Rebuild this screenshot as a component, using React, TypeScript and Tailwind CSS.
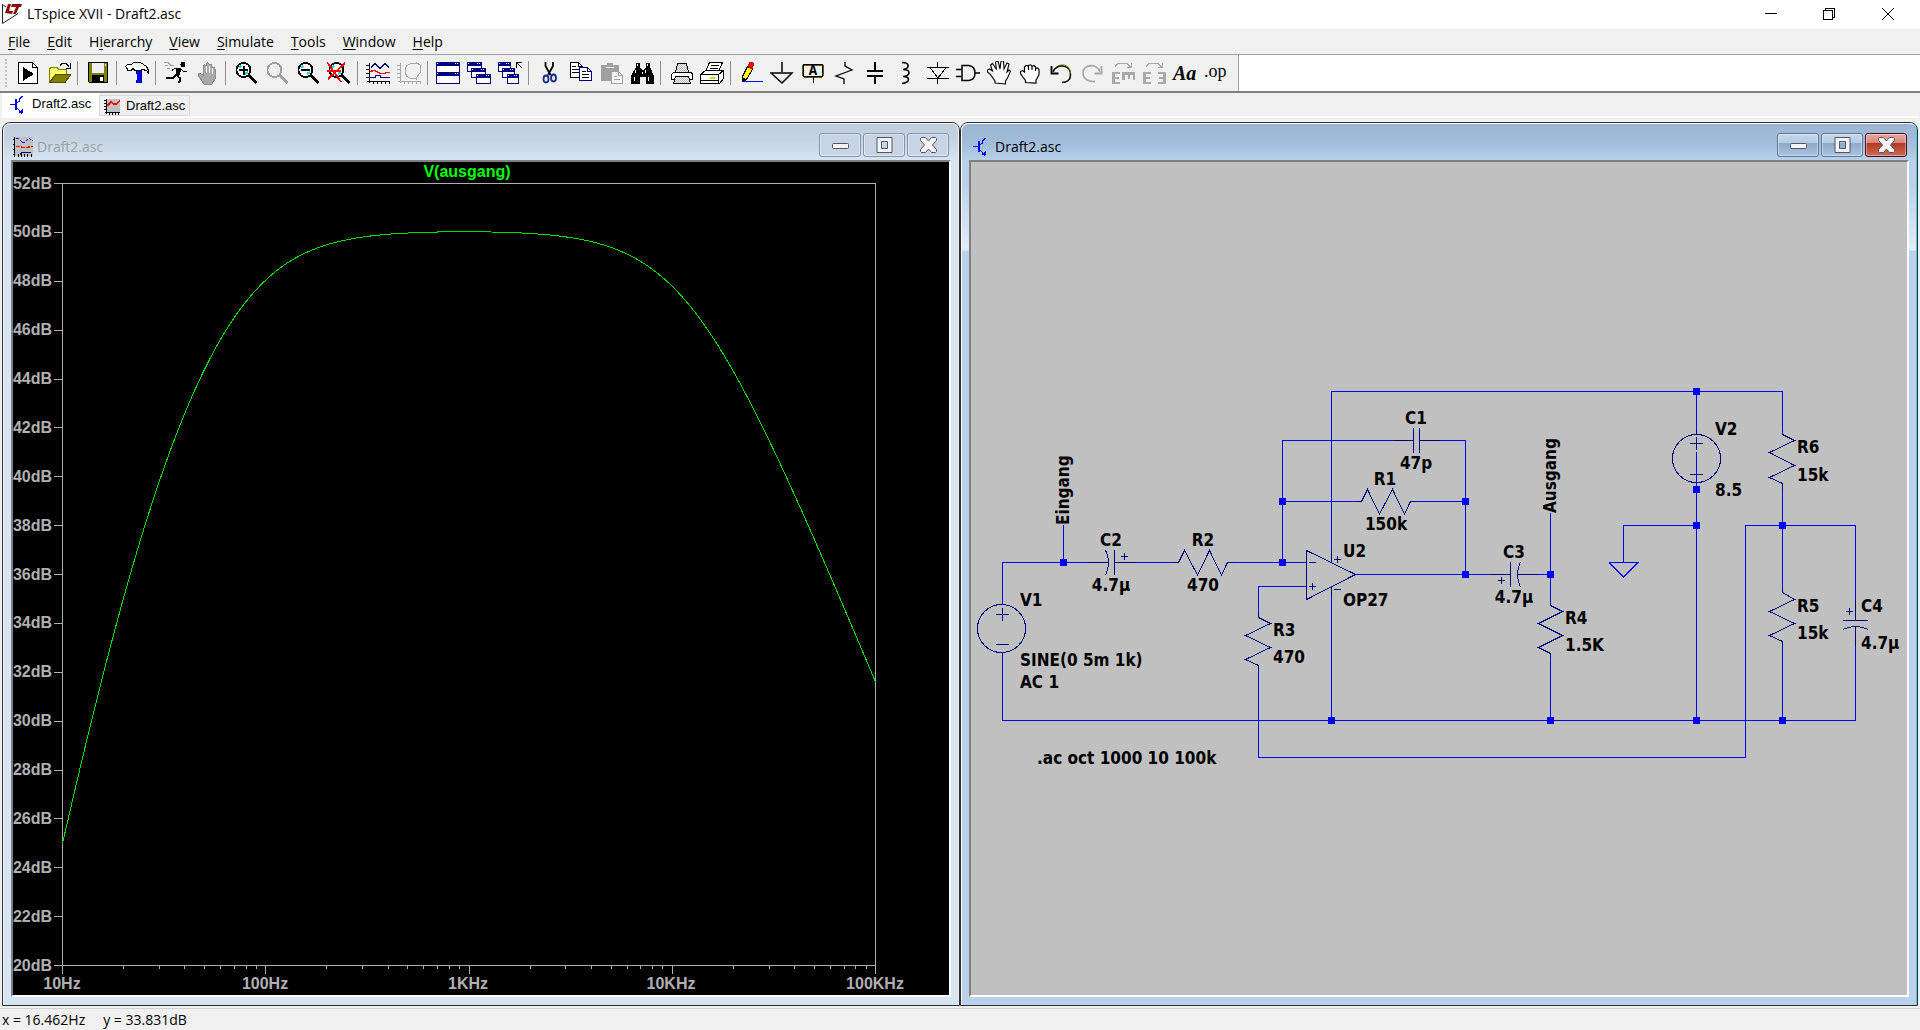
import React from "react";

type Kids = { children?: React.ReactNode };

/* ---------- toolbar icons, each drawn on a 24 x 24 grid ---------- */

function Ico({ children, smooth }: Kids & { smooth?: boolean }) {
  return (
    <svg width="24" height="24" viewBox="0 0 24 24" fill="none" stroke="#000" shapeRendering={smooth ? "auto" : "crispEdges"} aria-hidden="true">
      {children}
    </svg>
  );
}

const RunSheet = () => (
  <Ico>
    <path d="M2.5 1.5h14l5 5v16h-19z" fill="#fff" />
    <path d="M16.5 1.5v5h5" />
    <path d="M7.5 7v12L17 13z" fill="#000" />
  </Ico>
);
const OpenIcon = () => (
  <Ico>
    <path d="M2.5 21V8l2-2h5l2 2h8v5H9z" fill="#ffff66" stroke="#808000" />
    <path d="M2.5 21.5L9 13.5h15l-6 8z" fill="#808000" stroke="#4d4d00" />
    <path d="M13 4.500l2-2h4l3 3M23.500 2v5H19" />
  </Ico>
);
const SaveIcon = () => (
  <Ico>
    <path d="M2.500 1.500h19v20h-18l-1-1z" fill="#808000" />
    <path d="M6 2h12v10H6z" fill="#efefef" stroke="none" />
    <path d="M6 14h12v8H6z" fill="#000" stroke="none" />
    <path d="M14 16h3v4h-3z" fill="#fff" stroke="none" />
    <path d="M19 3h1v2h-1z" fill="#fff" stroke="none" />
  </Ico>
);
const HammerIcon = () => (
  <Ico>
    <path d="M.5 5.500l2-2h4l2-2h7l3 2 3 2 2 4v3l-2-3-4-1-2 1H10l-2-2-2 2H3l-1-2z" fill="#fff" />
    <path d="M11 10h5v3h-2v-2h-2v2h-1z" fill="#000080" stroke="none" />
    <path d="M12 10h4v12h-4z" fill="#0000ff" stroke="none" />
    <path d="M11 19h1v3h-1zM16 10h1v12h-1z" fill="#000080" stroke="none" />
  </Ico>
);
const RunnerIcon = () => (
  <Ico>
    <circle cx="19" cy="3.500" r="2.500" fill="#000" stroke="none" />
    <path d="M13 7l4 1-2 6-3 1z" fill="#000" stroke="#000" />
    <path d="M8 9.500l3-2.500h5l3 3h4" />
    <path d="M12 14l-3 3H2M12 14l4 3v3l-2 2" strokeWidth="1.500" />
    <path d="M0 1.500h4l3 3h3M3 7.500h3M1 4.500h3" stroke="#a0a0a0" />
  </Ico>
);
const HandGray = () => (
  <Ico>
    <path d="M8 14V5l1.500-1.500L11 5V3l1.500-1.500L14 3v1l2-1 1 2v2l2-1 1 2v10l-3 5H9l-6-9 1-2 2 1z" fill="#a8a8a8" stroke="#8c8c8c" />
    <path d="M11.500 5v7M14.500 5v7M17.500 7v6" stroke="#fff" />
  </Ico>
);
function Magnifier({ color = "#000", children }: Kids & { color?: string }) {
  return (
    <Ico>
      <circle cx="9.500" cy="9" r="7" stroke={color} strokeWidth="1.800" fill={color === "#000" ? "#fff" : "#eee"} />
      {color === "#000" && <path d="M5 7l2-2M11 13l3-2" stroke="#00e0e8" strokeWidth="2" />}
      <path d="M15 14.500l7.500 7.500" stroke={color} strokeWidth="3" />
      {children}
    </Ico>
  );
}
const ZoomIn = () => (<Magnifier><path d="M5 9h9M9.500 4.500v9" strokeWidth="2" /></Magnifier>);
const ZoomArea = () => <Magnifier color="#a0a0a0" />;
const ZoomOut = () => (<Magnifier><path d="M5 9h9" strokeWidth="2" /></Magnifier>);
const ZoomFit = () => (
  <Magnifier>
    <path d="M0 1l14 20M18 2L1 18M0 10h14" stroke="#f00" strokeWidth="1.800" />
  </Magnifier>
);
const Axes = ({ color }: { color: string }) => (
  <path d="M3.500 2v20M1 20.500h23M0 4.500h3M0 8.500h3M0 12.500h3M0 16.500h3M7.500 20v3M11.500 20v3M15.500 20v3M19.500 20v3M23.500 20v3" stroke={color} />
);
const WaveIcon = () => (
  <Ico>
    <Axes color="#000" />
    <path d="M5 6.500l4-4 5 5 5-5 4 4" stroke="#000080" />
    <path d="M4 10.500l4-1 3 1 3 2h4l3-1h3" stroke="#f00" strokeWidth="1.500" />
    <path d="M4 16.500h5l1-2h4v2h10" stroke="#000080" />
  </Ico>
);
const SmithIcon = () => (
  <Ico>
    <Axes color="#a8a8a8" />
    <path d="M20 2.500h-6l-4 2-2 3v4l2 4 4 2h6M19 1l5 4M24 5l-1 3v4l-4 5v2" stroke="#a8a8a8" />
  </Ico>
);
const MiniWin = ({ x, y, w, h }: { x: number; y: number; w: number; h: number }) => (
  <g>
    <rect x={x + 0.5} y={y + 0.5} width={w - 1} height={h - 1} fill="#fff" stroke="#000080" />
    <rect x={x} y={y} width={w} height="4" fill="#000080" stroke="none" />
    <path d={`M${x + w - 5} ${y + 1.5}h1M${x + w - 3} ${y + 1.5}h1M${x + 1} ${y + 1.5}h1`} stroke="#fff" />
  </g>
);
const TileIcon = () => (<Ico><MiniWin x={0} y={1} w={24} h={11} /><MiniWin x={0} y={11} w={24} h={12} /></Ico>);
const CascadeIcon = () => (
  <Ico><MiniWin x={0} y={1} w={15} h={10} /><MiniWin x={4} y={7} w={15} h={10} /><MiniWin x={9} y={13} w={15} h={10} /></Ico>
);
const CascadeBack = () => (
  <Ico>
    <MiniWin x={0} y={1} w={13} h={10} /><MiniWin x={4} y={7} w={13} h={10} /><MiniWin x={9} y={13} w={12} h={10} />
    <path d="M18.500 7V1.500H24M19 2l5 5" />
  </Ico>
);
const CutIcon = () => (
  <Ico smooth>
    <path d="M8.500 1v4l5 9M16 1v4l-5 9" strokeWidth="1.800" />
    <ellipse cx="9" cy="18" rx="2.500" ry="3.500" stroke="#1a2a90" strokeWidth="1.800" />
    <ellipse cx="16.500" cy="17" rx="2.500" ry="3.500" stroke="#1a2a90" strokeWidth="1.800" />
  </Ico>
);
const CopyIcon = () => (
  <Ico>
    <path d="M2.500 1.500h8l4 4v11h-12z" fill="#fff" />
    <path d="M10.500 1.500v4h4M4 5.500h4M4 8.500h7M4 11.500h7" />
    <path d="M11.500 6.500h8l4 4v9h-12z" fill="#fff" stroke="#000080" />
    <path d="M19.500 6.500v4h4" stroke="#000080" />
    <path d="M14 10.500h4M14 13.500h7M14 16.500h7" />
  </Ico>
);
const PasteIcon = () => (
  <Ico>
    <path d="M2 4h6V2h6v2h6v16H2z" fill="#a0a0a0" stroke="none" />
    <path d="M7 6.500h8" stroke="#eee" />
    <path d="M12.500 10.500h7l4 4v8h-11z" fill="#f4f4f4" stroke="#a0a0a0" />
    <path d="M19.500 10.500v4h4M15 15.500h3M15 18.500h6" stroke="#a0a0a0" />
  </Ico>
);
const FindIcon = () => (
  <Ico>
    <path d="M6 2h4v4l2 3h2l2-3V2h4v4l4 9v8h-8v-7h-6v7H1v-8l5-9z" fill="#000" stroke="none" />
    <path d="M7 3h1v2H7zM17 3h1v2h-1zM5 9h1v3H5zM4 16h1v4H4zM15 9h1v3h-1zM18 16h1v4h-1zM12 11h1v2h-1z" fill="#fff" stroke="none" />
  </Ico>
);
const Dots = () => (
  <defs>
    <pattern id="dots" width="2" height="2" patternUnits="userSpaceOnUse">
      <path d="M0 0h1v1H0zM1 1h1v1H1z" fill="#b4b4b4" stroke="none" />
    </pattern>
  </defs>
);
const PrintIcon = () => (
  <Ico>
    <Dots />
    <path d="M8.500 2.500h9l2 9h-13z" fill="#fff" />
    <path d="M8.500 2.500h9l2 9h-13z" fill="url(#dots)" />
    <path d="M4.500 11.500h18l1 2v5h-21v-5z" fill="#fff" />
    <path d="M6.500 15.500h13l2 7h-17z" fill="#fff" />
    <path d="M6.500 15.500h13l2 7h-17z" fill="url(#dots)" />
  </Ico>
);
const PrintSetup = () => (
  <Ico>
    <path d="M9.500 1.500h13l-4 9h-13z" fill="#fff" />
    <path d="M11 4.500h8M10 7.500h8" />
    <path d="M.5 13.500l5-4h18v8l-4 5H.5z" fill="#fff" />
    <path d="M.5 13.500h18l5-4M18.500 13.500v9M1 19.500h18" />
    <path d="M10 16.500h5" stroke="#d8d800" strokeWidth="2" />
  </Ico>
);
const PencilIcon = () => (
  <Ico>
    <path d="M3.500 15.500l5-10 5 3-6 10-4 2z" fill="#ff0" />
    <path d="M9 5l2-4h2l1 1v3l-1 3z" fill="#f00" stroke="#c00" />
    <path d="M2.500 16v5h2l3-3z" fill="#000" stroke="none" />
    <path d="M3 20.500h21" stroke="#0000ff" />
  </Ico>
);
const GroundIcon = () => (<Ico smooth><path d="M12 1v10M1 12h21L12 22z" strokeWidth="1.500" /></Ico>);
const LabelIcon = () => (
  <Ico>
    <path d="M3 3.500h18l1 1v10l-1 1H3l-1-1v-10z" stroke="#606000" strokeWidth="2" />
    <path d="M2.500 3.500h19v12h-19z" />
    <path d="M12.500 16v6" />
    <text x="12" y="14" textAnchor="middle" fill="#000" stroke="none" className="font-['Liberation_Mono'] text-sm font-bold">A</text>
  </Ico>
);
const ResistorIcon = () => (<Ico smooth><path d="M13 1v4l7 4L4 15l8 3v5" strokeWidth="1.300" /></Ico>);
const CapacitorIcon = () => (<Ico><path d="M12 1v9M12 15v8" strokeWidth="1.500" /><path d="M4 10h16M4 15h16" strokeWidth="2" /></Ico>);
const InductorIcon = () => (<Ico smooth><path d="M8 1.500c8 0 8 6 1 7 8 0 8 6 0 7 8 0 7 6-1 7" strokeWidth="1.600" /></Ico>);
const DiodeIcon = () => (<Ico><path d="M2 6.500h22M5 6.500l8 10.500 8-10.500M2 17.500h22M12.500 1v5M12.500 18v5" /></Ico>);
const GateIcon = () => (<Ico smooth><path d="M6 4.500h7q6 1 6 7.500t-6 7.500H6zM0 8.500h6M0 15.500h6M19 12h5" strokeWidth="1.500" /></Ico>);
const MoveIcon = () => (
  <Ico smooth>
    <path d="M8 22v-2l-5-7-2.500-2v-2l2-1 3 2-2-6 2-1.500 4 6-1-7.500 2.500-1 2 8 1-8 2.500 0 .5 8 3-6 2 1-2 8 2-2 1.500 1-3 7-2 3v3z" fill="#fff" strokeWidth="1.100" />
  </Ico>
);
const DragIcon = () => (
  <Ico smooth>
    <path d="M7.500 21.500v-2l-3-4-2-3v-2l2-1 2 1.500V6L8 4.500 10 5l1-1h2l1 1.500 2-1 1.500 1.500v1.500l2-.5 1.500 1.500v5l-2 4-1 1.500v3zM10.500 5v4M14 5.500V9M17.500 7v3" fill="#fff" strokeWidth="1.200" />
  </Ico>
);
const UndoIcon = () => (
  <Ico smooth>
    <path d="M4 11c3-9 18-8 17.500 3 0 5-4 7.500-8.500 7.500" strokeWidth="1.600" />
    <path d="M9 5c6-3 12 0 12.500 7" stroke="#808000" />
    <path d="M2.500 5v7.500h7" strokeWidth="1.800" />
  </Ico>
);
const RedoIcon = () => (
  <Ico smooth>
    <path d="M20 11C17 2 3 3 3 12c0 6 6 9 12 8.500" stroke="#a8a8a8" strokeWidth="1.800" />
    <path d="M21.500 5v7.500h-7" stroke="#a8a8a8" strokeWidth="1.800" />
  </Ico>
);
const RotateIcon = () => (
  <Ico>
    <path d="M4 5.500l3-3h9l4 4M20.500 2v4.500H16" stroke="#a8a8a8" />
    <path d="M1 11h8v2H4v3h4v2H4v3h5v2H1zM11 11h13v8h-2v-5h-3v4h-2v-4h-3v5h-3z" fill="#a8a8a8" stroke="none" />
  </Ico>
);
const MirrorIcon = () => (
  <Ico>
    <path d="M4 5.500l3-3h9l4 4M20.500 2v4.500H16" stroke="#a8a8a8" />
    <path d="M1 11h8v2H4v3h4v2H4v3h5v2H1zM24 11h-8v2h5v3h-4v2h4v3h-5v2h8z" fill="#a8a8a8" stroke="none" />
  </Ico>
);
const TextIcon = () => (
  <span aria-hidden="true" className="font-['Liberation_Serif'] text-xl leading-6 font-bold italic">Aa</span>
);
const DirectiveIcon = () => (
  <span aria-hidden="true" className="pb-1 font-['Liberation_Serif'] text-lg leading-5">.op</span>
);

const toolGroups: [string, React.ComponentType, boolean?][][] = [
  [["New schematic", RunSheet], ["Open", OpenIcon]],
  [["Save", SaveIcon]],
  [["Control panel", HammerIcon]],
  [["Run", RunnerIcon], ["Halt", HandGray, true]],
  [["Zoom in", ZoomIn], ["Zoom area", ZoomArea, true], ["Zoom out", ZoomOut], ["Zoom to fit", ZoomFit]],
  [["Autorange", WaveIcon], ["Smith chart", SmithIcon, true]],
  [["Tile", TileIcon], ["Cascade", CascadeIcon], ["Close all", CascadeBack]],
  [["Cut", CutIcon], ["Copy", CopyIcon], ["Paste", PasteIcon, true], ["Find", FindIcon]],
  [["Print", PrintIcon], ["Print setup", PrintSetup]],
  [
    ["Wire", PencilIcon], ["Ground", GroundIcon], ["Label net", LabelIcon], ["Resistor", ResistorIcon],
    ["Capacitor", CapacitorIcon], ["Inductor", InductorIcon], ["Diode", DiodeIcon], ["Component", GateIcon],
    ["Move", MoveIcon], ["Drag", DragIcon], ["Undo", UndoIcon], ["Redo", RedoIcon, true],
    ["Rotate", RotateIcon, true], ["Mirror", MirrorIcon, true], ["Text", TextIcon], ["SPICE directive", DirectiveIcon],
  ],
];

/* ---------- small document icons ---------- */

const TransistorIcon = () => (
  <svg width="20" height="20" viewBox="0 0 20 20" stroke="#0000ff" fill="none" shapeRendering="crispEdges" aria-hidden="true">
    <path d="M2 9.500h5M14.500 1l-3 3v2L8 8M8 12l3 3 3 4" />
    <path d="M8 4v11" strokeWidth="2" />
    <path d="M10 18h5v-4z" fill="#0000ff" stroke="none" />
  </svg>
);
const PlotTabIcon = () => (
  <svg width="16" height="18" viewBox="0 0 16 18" fill="none" shapeRendering="crispEdges" aria-hidden="true">
    <path d="M2 1h14v13H2z" fill="#c0c0c0" />
    <path d="M2.500 1v15M1 14.500h15M0 2.500h2M0 5.500h2M0 8.500h2M0 11.500h2M5.500 14v3M8.500 14v3M11.500 14v3M14.500 14v3" stroke="#000" />
    <path d="M3 8l4-4 3 2h2l4-3" stroke="#f00" strokeWidth="1.500" />
  </svg>
);
const PlotWindowIcon = () => (
  <svg width="20" height="20" viewBox="0 0 20 20" fill="none" shapeRendering="crispEdges" aria-hidden="true">
    <path d="M1 0h19v19H1z" fill="#c0c0c0" />
    <path d="M1.500 0v20M0 2.500h2M0 7.500h2M0 12.500h2M0 17.500h2M5.500 17v3M8.500 17v3M11.500 17v3M14.500 17v3M18.500 17v3" stroke="#000" />
    <path d="M3 1l3 1 3 3 2 1 3-3 2-2 4 3" stroke="#0000ff" strokeDasharray="3 1" />
    <path d="M3 9.500h4l3 1h5l2-1h3" stroke="#f00" strokeWidth="1.500" strokeDasharray="4 1" />
    <path d="M7 17.500l2-2h9" stroke="#000080" />
  </svg>
);
const LogoIcon = () => (
  <svg width="20" height="20" viewBox="0 0 20 20" aria-hidden="true">
    <path d="M.5.500v19L16 9.500" fill="none" stroke="#222" />
    <path d="M.5.500L4 3" fill="none" stroke="#222" />
    <path d="M6 0h3L7 7h4l-1 3-7-1zM10 0h10l-1 3h-2l-3 7h-3l3-7h-5z" fill="#8a0a10" />
  </svg>
);

/* ---------- child window frame ---------- */

const glyphs = {
  minimize: <rect x="2.500" y="8.500" width="16" height="5" rx="1" fill="#f4f4f4" stroke="#545468" />,
  restore: (
    <path d="M3 2.500h15v15H3zM7.500 6.500v7h6v-7z" fill="#f4f4f4" stroke="#545468" fillRule="evenodd" />
  ),
  close: (
    <path d="M2.500 3.500l1-1h4l3 3.500 3-3.500h4l1 1v2l-4 4.500 4 4.500v2l-1 1h-4l-3-3.500-3 3.500h-4l-1-1v-2l4-4.500-4-4.500z" fill="#f4f4f4" stroke="#545468" />
  ),
};

function FrameButton({ kind, active }: { kind: keyof typeof glyphs; active: boolean }) {
  const look = !active
    ? "border-[#8594b0] bg-[#c6d4e3]"
    : kind === "close"
      ? "border-[#4b0d1c] bg-[linear-gradient(#e8a89f_0%,#d98578_42%,#b33a22_43%,#cc6a58_100%)]"
      : "border-[#5f7797] bg-[linear-gradient(#c3d6ea_0%,#b3cbe4_42%,#8faac9_43%,#a9c3df_100%)]";
  return (
    <button type="button" aria-label={kind} className={`flex h-6 w-[42px] items-center justify-center rounded-[3px] border shadow-[inset_0_0_0_1px_rgba(255,255,255,0.4)] ${look}`}>
      <svg width="21" height="20" viewBox="0 0 21 20" aria-hidden="true">{glyphs[kind]}</svg>
    </button>
  );
}

function ChildWindow({ title, icon, active, children }: Kids & { title: string; icon: React.ReactNode; active: boolean }) {
  return (
    <section
      className={`flex min-w-0 flex-col rounded-t-lg border border-[#303030] ${
        active
          ? "bg-[linear-gradient(#9ab5d3_0px,#a3bedb_22px,#b9d1ea_38px,#b9d1ea_60px,#e2ecf7_127px,#b9d1ea_128px)]"
          : "bg-[linear-gradient(#bfcddb_0px,#c6d3e1_18px,#d7e4f2_38px)]"
      }`}
    >
      <div className={`flex min-h-0 flex-1 flex-col rounded-t-[7px] border border-b-0 px-[7px] pb-2 ${active ? "border-white border-r-[#3fd0ee]" : "border-[#eef3f9]"}`}>
        <header className="flex h-9 items-end gap-1 pr-0.5 pb-[3px] pl-0.5">
          {icon}
          <h2 className={`flex-1 text-sm leading-5 ${active ? "text-black" : "text-[#9aa0a6]"}`}>{title}</h2>
          <div className="flex gap-0.5">
            <FrameButton kind="minimize" active={active} />
            <FrameButton kind="restore" active={active} />
            <FrameButton kind="close" active={active} />
          </div>
        </header>
        <div className="flex min-h-0 flex-1 border-2 border-t-[#808080] border-r-white border-b-white border-l-[#808080]">{children}</div>
      </div>
    </section>
  );
}

/* ---------- frequency response plot ---------- */

const PX = { left: 49.5, right: 862.5, top: 21.5, bottom: 803.5 };
const decade = (PX.right - PX.left) / 4;
const freqX = (f: number) => PX.left + (Math.log10(f) - 1) * decade;
const dbY = (db: number) => PX.bottom - ((db - 20) * (PX.bottom - PX.top)) / 32;

function gainDb(f: number) {
  const highPass = (fc: number) => -10 * Math.log10(1 + (fc / f) ** 2);
  const lowPass = -10 * Math.log10(1 + (f / 12000) ** 2);
  return 20 * Math.log10(150000 / 470) + highPass(72) + highPass(22.6) + lowPass;
}

const trace = Array.from({ length: 401 }, (_, i) => {
  const f = 10 ** (1 + i / 100);
  return `${freqX(f).toFixed(2)},${dbY(gainDb(f)).toFixed(2)}`;
}).join(" ");

function Plot() {
  const labels = ["10Hz", "100Hz", "1KHz", "10KHz", "100KHz"];
  const dbs = Array.from({ length: 17 }, (_, i) => 20 + 2 * i);
  return (
    <svg viewBox="0 0 936 833" className="h-full w-full bg-black font-['Liberation_Sans',sans-serif] text-base font-bold" role="img" aria-label="V(ausgang) frequency response">
      <text x="454" y="15" textAnchor="middle" fill="#00ff00">V(ausgang)</text>
      <g stroke="#b0b0b0" fill="none" shapeRendering="crispEdges">
        <rect x={PX.left} y={PX.top} width={PX.right - PX.left} height={PX.bottom - PX.top} />
        {dbs.map((d) => <path key={d} d={`M41 ${dbY(d)}H50`} />)}
        {labels.map((l, i) => <path key={l} d={`M${PX.left + i * decade} 804v8`} />)}
        {[10, 100, 1000, 10000].flatMap((base) =>
          [2, 3, 4, 5, 6, 7, 8, 9].map((n) => <path key={base * n} d={`M${freqX(base * n)} 804v3`} />)
        )}
      </g>
      <g fill="#b0b0b0">
        {dbs.map((d) => <text key={d} x="39" y={Math.round(dbY(d)) + 5} textAnchor="end">{d}dB</text>)}
        {labels.map((l, i) => <text key={l} x={Math.round(PX.left + i * decade) - 1} y="827" textAnchor="middle">{l}</text>)}
      </g>
      <polyline points={trace} fill="none" stroke="#00e000" shapeRendering="crispEdges" />
    </svg>
  );
}

/* ---------- schematic ---------- */

const wires = [
  "M1002.5 605V562.5H1088M1063.5 525V562M1136 562.5H1173M1233 562.5H1306M1282.5 562V440.5H1393M1440 440.5H1465.5V574",
  "M1282 501.5H1356M1416 501.5H1465M1331.5 551V391.5H1782.5V430M1331.5 597V720M1356 574.5H1490M1538 574.5H1550",
  "M1306 586.5H1258.5V612M1258.5 671V757.5H1745.5V525.5H1855.5V600M1855.5 647V720.5H1002.5V652",
  "M1550.5 513V600M1550.5 658V720M1696.5 391V430M1696.5 452V720M1696 525.5H1623.5V562M1609 562.5H1638L1623.5 577L1609 562.5",
  "M1782.5 489V588M1782.5 647V720",
].join("");

const symbols = [
  "M1088 562.500H1108M1105.500 550q6 12.500 0 25M1114.500 550v25M1115 562.500h21M1121 556.500h7M1124.500 553v7",
  "M1173 562.500h5.500l6-12 13 24.500 12-24.500 12 24.500 6-12.500h6",
  "M1393 440.500h20.500M1413.500 428v25M1419.500 428v25M1419 440.500h21",
  "M1356 501.500h5.500l6-12 12 24.500 13-24.500 12 24.500 6-12.500h6",
  "M1306.500 550.500v49l49-25zM1331.500 551v12M1331.500 587v10M1309 562.500h7M1309 586.500h7M1312.500 583v7M1334 559.500h7M1337.500 556v7M1334 589.500h7",
  "M1258.500 612v5.500l12 6-25 12 25 12-25 12 13 6v5.500",
  "M1550.500 600v5.500l12 6-24 12 24 12-24 12 12 6v5.500",
  "M1782.500 430v4.500l12 6-25 12 25 13-25 12 13 6v5.500",
  "M1782.500 588v4.500l12 7-25 12 25 12-25 12 13 6v5.500",
  "M1490 574.500h20.500M1510.500 562v25M1520.500 562q-6 12.500 0 25M1517.500 574.500h21M1498 580.500h7M1501.500 577v7",
  "M1855.500 600v20.500M1843 620.500h25M1843 629.500q12.500-6 25 0M1855.500 627v20M1846 611.500h7M1849.500 608v7",
  "M996 614.500h13M1002.500 608v13M996 644.500h13M1690 443.500h13M1696.500 437v13M1690 474.500h13M1696.500 430v5",
].join("");

const nodes = [
  [1063, 562], [1282, 562], [1282, 501], [1465, 501], [1465, 574], [1550, 574], [1331, 720], [1550, 720],
  [1696, 720], [1782, 720], [1696, 391], [1696, 489], [1696, 525], [1782, 525],
];

const centered: [number, number, string][] = [
  [1416, 424, "C1"], [1416, 469, "47p"], [1385, 485, "R1"], [1386, 530, "150k"], [1111, 546, "C2"], [1111, 591, "4.7µ"],
  [1203, 546, "R2"], [1203, 591, "470"], [1514, 558, "C3"], [1514, 603, "4.7µ"],
];
const leading: [number, number, string][] = [
  [1343, 557, "U2"], [1343, 606, "OP27"], [1273, 636, "R3"], [1273, 663, "470"], [1020, 606, "V1"],
  [1020, 666, "SINE(0 5m 1k)"], [1020, 688, "AC 1"], [1037, 764, ".ac oct 1000 10 100k"], [1565, 624, "R4"],
  [1565, 651, "1.5K"], [1715, 435, "V2"], [1715, 496, "8.5"], [1797, 453, "R6"], [1797, 481, "15k"],
  [1797, 612, "R5"], [1797, 639, "15k"], [1861, 612, "C4"], [1861, 649, "4.7µ"],
];

function Schematic() {
  return (
    <svg viewBox="971 162 936 833" className="h-full w-full bg-[#c0c0c0] font-['DejaVu_Sans_Condensed','DejaVu_Sans',sans-serif] text-[17px] font-bold" role="img" aria-label="Amplifier schematic">
      <g fill="none" shapeRendering="crispEdges">
        <path d={symbols} stroke="#000080" />
        <circle cx="1001.500" cy="628.500" r="24" stroke="#000080" />
        <circle cx="1696.500" cy="458.500" r="24" stroke="#000080" />
        <path d={wires} stroke="#0000ff" />
      </g>
      {nodes.map(([x, y]) => <rect key={`${x}-${y}`} x={x - 3} y={y - 3} width="7" height="7" fill="#0000ff" />)}
      {centered.map(([x, y, t]) => <text key={`${x}-${y}`} x={x} y={y} textAnchor="middle">{t}</text>)}
      {leading.map(([x, y, t]) => <text key={`${x}-${y}`} x={x} y={y}>{t}</text>)}
      <text transform="translate(1069 525) rotate(-90)">Eingang</text>
      <text transform="translate(1556 513) rotate(-90)">Ausgang</text>
    </svg>
  );
}

/* ---------- application ---------- */

const menus: [string, string, string][] = [
  ["", "F", "ile"], ["", "E", "dit"], ["H", "i", "erarchy"], ["", "V", "iew"],
  ["", "S", "imulate"], ["", "T", "ools"], ["", "W", "indow"], ["", "H", "elp"],
];

export default function App() {
  return (
    <div className="flex h-screen flex-col bg-[#f0f0f0] font-['Open_Sans','Noto_Sans',sans-serif] text-sm text-black">
      <header className="flex h-[29px] items-center bg-white px-0.5 pb-px">
        <LogoIcon />
        <h1 className="flex-1 pl-[5px] text-sm">LTspice XVII - Draft2.asc</h1>
        <div className="flex">
          <button type="button" aria-label="Minimize" className="flex w-[58px] items-center justify-center">
            <svg width="12" height="12" shapeRendering="crispEdges"><path d="M0 5.500h12" stroke="#000" /></svg>
          </button>
          <button type="button" aria-label="Restore" className="flex w-[58px] items-center justify-center">
            <svg width="12" height="12" fill="none" stroke="#000" shapeRendering="crispEdges"><path d="M.5 2.500h9v9h-9zM2.500 2V.5h9v9H10" /></svg>
          </button>
          <button type="button" aria-label="Close" className="flex w-[60px] items-center justify-center">
            <svg width="12" height="12" stroke="#000"><path d="M0 0l12 12M12 0L0 12" /></svg>
          </button>
        </div>
      </header>

      <nav className="flex h-[26px] items-center gap-[17px] border-b border-[#a0a0a0] pl-2" aria-label="Menu">
        {menus.map(([pre, key, post]) => (
          <button type="button" key={post} className="leading-5">
            {pre}<span className="underline underline-offset-2">{key}</span>{post}
          </button>
        ))}
      </nav>

      <div className="flex h-[38px] border-b-2 border-[#808080] bg-white">
        <div className="flex items-center border-r border-[#a0a0a0] bg-[#f0f0f0] pr-[7px]">
          <div className="mr-[5px] ml-[5px] h-7 border-l-2 border-dotted border-[#c0c0c0]" />
          {toolGroups.map((group, gi) => (
            <React.Fragment key={gi}>
              {gi > 0 && <div className="mx-[3px] h-6 w-0.5 border-l border-[#909090]" />}
              {group.map(([name, Icon, off]) => (
                <button type="button" key={name} aria-label={name} disabled={off} className="flex h-7 w-[31px] items-center pl-1">
                  <Icon />
                </button>
              ))}
            </React.Fragment>
          ))}
        </div>
      </div>

      <div className="mx-0.5 flex h-[25px] items-stretch border-b-2 border-white font-['Liberation_Sans',sans-serif] text-[13px]" role="tablist">
        <button type="button" role="tab" aria-selected="true" className="flex w-[97px] items-center gap-1 bg-white pl-1.5">
          <TransistorIcon />Draft2.asc
        </button>
        <button type="button" role="tab" aria-selected="false" className="mt-0.5 flex w-[91px] items-center gap-1.5 border border-[#d9d9d9] pt-0.5 pl-1">
          <PlotTabIcon />Draft2.asc
        </button>
      </div>

      <main className="mx-0.5 mt-1 grid min-h-0 flex-1 grid-cols-2">
        <ChildWindow title="Draft2.asc" icon={<PlotWindowIcon />} active={false}><Plot /></ChildWindow>
        <ChildWindow title="Draft2.asc" icon={<TransistorIcon />} active><Schematic /></ChildWindow>
      </main>

      <footer className="mt-0.5 flex h-[22px] items-center gap-[18px] border-t border-[#d0d0d0] pl-0.5 text-sm">
        <span>x = 16.462Hz</span>
        <span>y = 33.831dB</span>
      </footer>
    </div>
  );
}
